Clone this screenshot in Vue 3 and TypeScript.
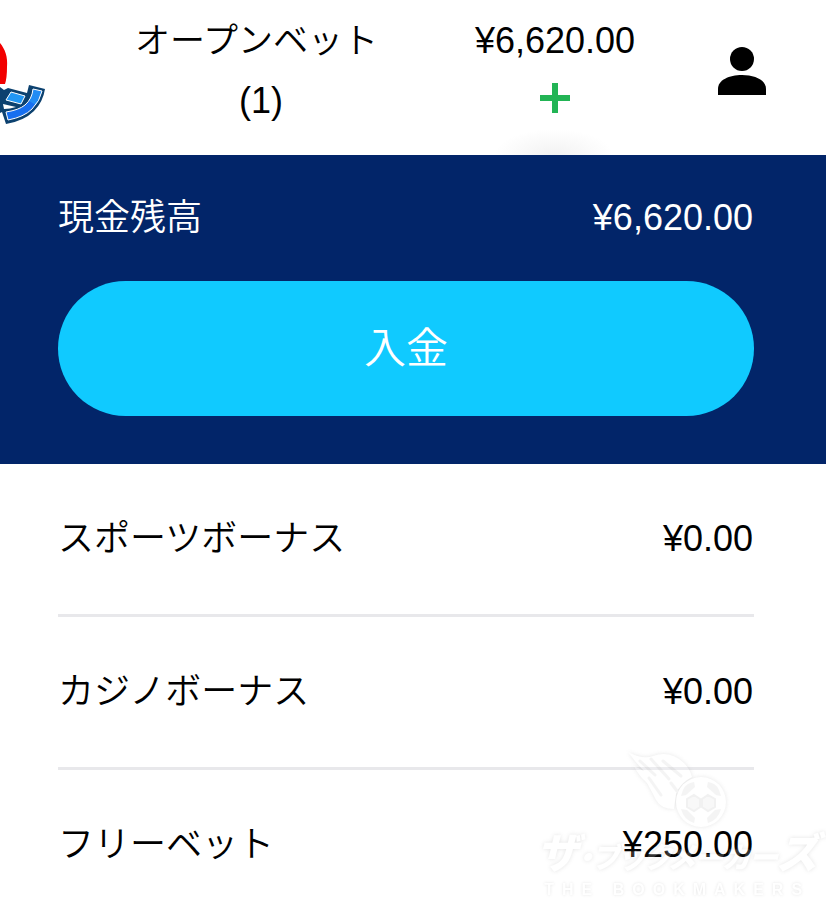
<script setup lang="ts">
interface BonusRow {
  label: string
  amount: string
}

const balance = '¥6,620.00'
const openBets = 1

const bonuses: BonusRow[] = [
  { label: 'スポーツボーナス', amount: '¥0.00' },
  { label: 'カジノボーナス', amount: '¥0.00' },
  { label: 'フリーベット', amount: '¥250.00' },
]
</script>

<template>
  <div class="page">
    <header class="header">
      <a class="logo" href="#" aria-label="ホーム">
        <svg width="48" height="96" viewBox="0 0 48 96" aria-hidden="true">
          <path d="M0 13C5 19 8 27 7 37Q7 48 5 54H0Z" fill="#f20000" />
          <path d="M0 57L4 60L8 58L27 63L29 55L45 59Q43 72 34 81Q24 91 6 94L2 82L0 83Z" fill="#0c416f" />
          <path d="M11 62L25 66L21 74L6 70Z" fill="#2196f3" stroke="#fff" stroke-width="1" />
          <path d="M33 59L42 61Q40 71 32 79Q24 87 8 90L6 82Q19 80 25 75Q32 69 33 59Z" fill="#176ff0" />
          <path d="M33 59L42 61Q40 69 36 75L29 71Q32 66 33 59Z" fill="#218cf4" />
          <path d="M33 59L42 61Q40 71 32 79Q24 87 8 90L6 82Q19 80 25 75Q32 69 33 59Z" fill="none" stroke="#fff" stroke-width="1" />
          <path d="M3 74L16 77Q10 79 4 79Z" fill="#fff" />
        </svg>
      </a>
      <a class="stack" href="#">
        <span class="bets">オープンベット</span>
        <span>({{ openBets }})</span>
      </a>
      <button class="stack balance" type="button" aria-label="残高 入金する">
        <span>{{ balance }}</span>
        <span class="plus">
          <svg width="30" height="30" viewBox="0 0 30 30" aria-hidden="true">
            <path d="M12 0H18V12H30V18H18V30H12V18H0V12H12Z" fill="#22b455" />
          </svg>
        </span>
      </button>
      <button class="profile" type="button" aria-label="アカウント">
        <svg width="48" height="48" viewBox="0 0 48 48" aria-hidden="true">
          <circle cx="24" cy="12" r="12" />
          <path d="M0 48V42C0 33 11 28 24 28S48 33 48 42V48Z" />
        </svg>
      </button>
    </header>

    <main>
      <section class="cash">
        <div class="line">
          <span>現金残高</span>
          <span class="amount">{{ balance }}</span>
        </div>
        <button class="deposit" type="button">入金</button>
      </section>

      <ul class="bonuses">
        <li v-for="bonus in bonuses" :key="bonus.label" class="line">
          <span>{{ bonus.label }}</span>
          <span class="amount">{{ bonus.amount }}</span>
        </li>
      </ul>
    </main>

    <div class="watermark">
      <svg class="ball" width="104" height="82" viewBox="0 0 104 82" aria-hidden="true">
        <path d="M3 3Q18 11 28 7Q45 1 59 14Q65 20 67 28Q55 34 51 45L49 60Q36 60 31 51Q27 43 22 34Q13 26 9 17L19 22Q10 13 3 3Z" />
        <path class="streak" d="M15 12L30 26M26 10L44 30M38 12L56 27M24 29L36 46M46 34L52 42" />
        <circle cx="76" cy="53" r="25" />
        <path class="patch" d="M58 41Q61 34 69 33L70 38L61 46L56 47ZM94 41Q91 34 83 33L82 38L91 46L96 47ZM56 60L62 61L70 69L69 74Q59 71 56 60ZM96 60L90 61L82 69L83 74Q93 71 96 60Z" />
        <path class="cell" d="M69 46L75 50V58L69 62L62 58V50ZM83 46L90 50V58L83 62L77 58V50Z" />
      </svg>
      <span class="brand"><b>ザ</b>・ブックメーカー<b>ズ</b></span>
      <span class="sub">THE BOOKMAKERS</span>
    </div>
  </div>
</template>

<style>
body {
  margin: 0;
  background: #fff;
}
</style>

<style scoped>
.page {
  position: relative;
  overflow: hidden;
  background: #fff;
  color: #000;
  font-family: "Liberation Sans", "Noto Sans CJK JP", sans-serif;
  font-size: 36px;
  font-weight: 350;
  line-height: 54px;
}

button {
  border: 0;
  padding: 0;
  background: none;
  color: inherit;
  font: inherit;
  cursor: pointer;
}

a {
  color: inherit;
  text-decoration: none;
}

svg {
  display: block;
}

.header {
  position: relative;
  display: grid;
  grid-template-columns: 114px 1fr 1fr 80px;
  padding: 11px 44px 24px 0;
}

.header::after {
  content: "";
  position: absolute;
  right: 212px;
  bottom: 0;
  width: 120px;
  height: 26px;
  background: radial-gradient(ellipse at bottom, #f2f2f2, #fff 70%);
}

.logo {
  align-self: end;
  padding-bottom: 5px;
}

.stack {
  display: flex;
  flex-direction: column;
  align-items: center;
  line-height: 60px;
  white-space: nowrap;
}

.bets {
  padding-right: 9px;
  font-size: 35px;
}

.plus {
  display: flex;
  align-items: center;
  height: 54px;
}

.profile {
  display: flex;
  align-items: center;
  justify-content: center;
}

.cash {
  display: flex;
  flex-direction: column;
  gap: 36px;
  padding: 36px 72px 48px 58px;
  background: #022569;
  color: #fff;
}

.line {
  display: flex;
  align-items: center;
  justify-content: space-between;
}

.amount {
  padding-right: 1px;
}

.deposit {
  height: 135px;
  border-radius: 68px;
  background: #10caff;
  font-size: 42px;
}

.bonuses {
  margin: 0;
  padding: 0 72px 0 58px;
  list-style: none;
}

.bonuses .line {
  padding: 48px 0;
}

.bonuses .line + .line {
  border-top: 3px solid #e8e8eb;
}

.bonuses .line:last-child {
  padding-bottom: 35px;
}

.watermark {
  position: absolute;
  right: 8px;
  bottom: 8px;
  display: flex;
  flex-direction: column;
  align-items: center;
  color: #fff;
  opacity: 0.2;
  pointer-events: none;
}

.ball {
  overflow: visible;
  fill: #fff;
  filter: drop-shadow(0 0 2px #888);
}

.ball .streak {
  fill: none;
  stroke: #ccc;
  stroke-width: 3;
  stroke-linecap: round;
}

.ball .patch {
  fill: #ccc;
}

.ball .cell {
  fill: #ddd;
  stroke: #bbb;
  stroke-width: 2;
}

.brand {
  display: flex;
  align-items: baseline;
  font-size: 29px;
  font-style: italic;
  font-weight: 900;
  line-height: 46px;
  font-feature-settings: "palt";
  text-shadow: 0 0 4px #777;
}

.brand b {
  font-size: 42px;
}

.sub {
  font-size: 16px;
  font-weight: 700;
  line-height: 18px;
  letter-spacing: 8px;
  text-shadow: 0 0 3px #777;
}
</style>
